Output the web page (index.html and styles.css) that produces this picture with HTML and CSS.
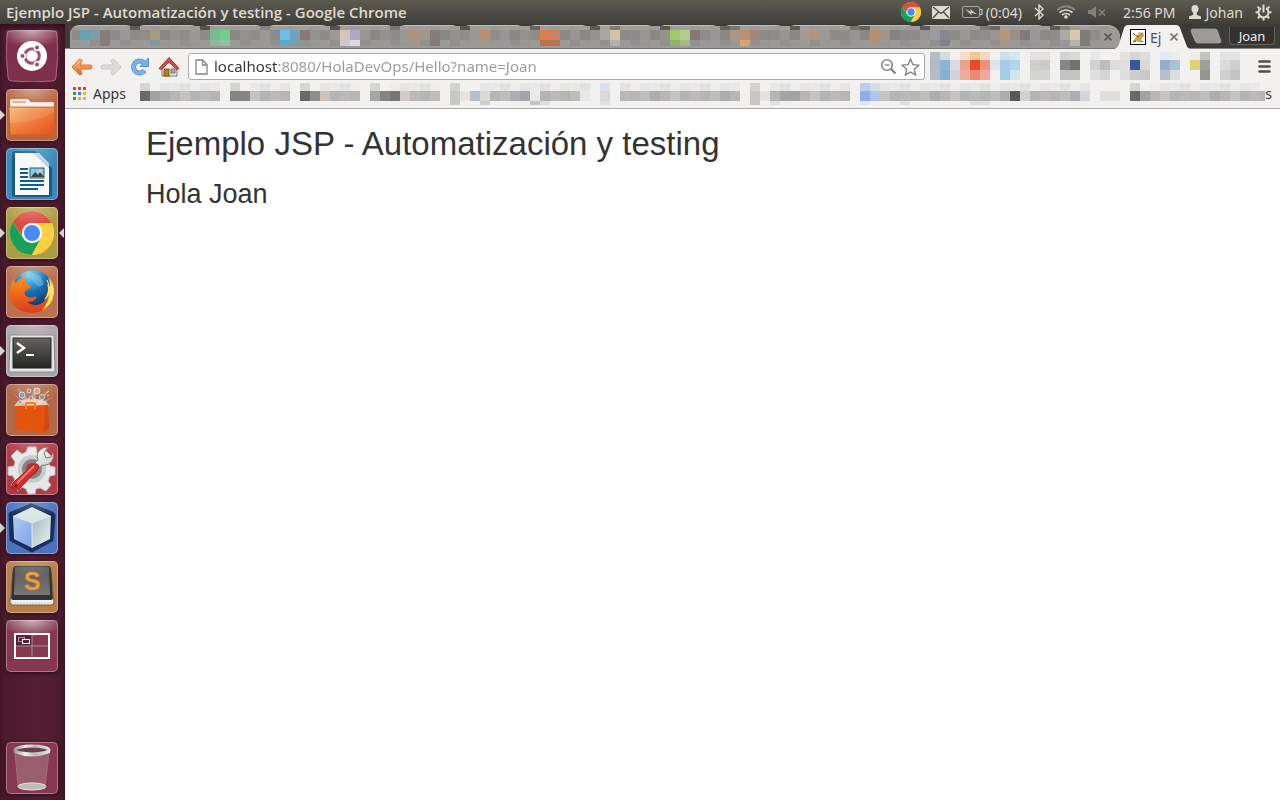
FILE: index.html
```html
<!DOCTYPE html>
<html lang="es">
<head>
<meta charset="utf-8">
<title>Ejemplo JSP - Automatización y testing</title>
<link rel="stylesheet" href="styles.css">
</head>
<body>
<svg width="0" height="0" class="defs" aria-hidden="true">
  <defs>
    <radialGradient id="shine" cx=".5" cy="0" r=".6"><stop offset="0" stop-color="#fff" stop-opacity=".6"/><stop offset="1" stop-color="#fff" stop-opacity="0"/></radialGradient>
    <linearGradient id="orange" x1="0" y1="0" x2="1" y2="1"><stop offset="0" stop-color="#f6b66e"/><stop offset=".5" stop-color="#ef7b3a"/><stop offset="1" stop-color="#e4501b"/></linearGradient>
    <linearGradient id="arrow" x1="0" y1="0" x2="0" y2="1"><stop offset="0" stop-color="#fbc28c"/><stop offset="1" stop-color="#e66a1c"/></linearGradient>
    <linearGradient id="steel" x1="0" y1="0" x2="1" y2="1"><stop offset="0" stop-color="#fafafa"/><stop offset="1" stop-color="#c6c6c6"/></linearGradient>
    <linearGradient id="screen" x1="0" y1="0" x2="0" y2="1"><stop offset="0" stop-color="#66625f"/><stop offset="1" stop-color="#262626"/></linearGradient>
    <linearGradient id="key" x1="0" y1="0" x2="0" y2="1"><stop offset="0" stop-color="#5b5b59"/><stop offset="1" stop-color="#777775"/></linearGradient>
    <radialGradient id="globe" cx=".4" cy=".15" r=".8"><stop offset="0" stop-color="#6fd0f2"/><stop offset=".5" stop-color="#1c70b4"/><stop offset="1" stop-color="#123468"/></radialGradient>
    <linearGradient id="fox" x1="0" y1="0" x2="0" y2="1"><stop offset="0" stop-color="#f59a28"/><stop offset=".5" stop-color="#ee6a1c"/><stop offset="1" stop-color="#dc3b1b"/></linearGradient>
    <linearGradient id="cubeleft" x1="0" y1="0" x2="1" y2="1"><stop offset="0" stop-color="#b5cbf4"/><stop offset="1" stop-color="#7c9fe2"/></linearGradient>
    <linearGradient id="cuberight" x1="0" y1="0" x2="1" y2="1"><stop offset="0" stop-color="#9fb7be"/><stop offset="1" stop-color="#eef4f4"/></linearGradient>
    <linearGradient id="rim" x1="0" x2="1"><stop offset="0" stop-color="#999"/><stop offset=".3" stop-color="#eee"/><stop offset=".6" stop-color="#bbb"/><stop offset="1" stop-color="#e5e5e5"/></linearGradient>
    <symbol id="chrome" viewBox="0 0 44 44">
      <circle cx="22" cy="22" r="22" fill="#ffce44"/>
      <path d="M22 12H41.5A22 22 0 0 0 2.9 11L13 26Z" fill="#db4b40"/>
      <path d="M2.9 11A22 22 0 0 0 22 44L31 27L13 27Z" fill="#19a05b"/>
      <path d="M22 44A22 22 0 0 0 41.5 12H22L31 27Z" fill="#ffce44"/>
      <circle cx="22" cy="22" r="10.2" fill="#fff"/><circle cx="22" cy="22" r="8" fill="#4a8af5"/>
    </symbol>
  </defs>
</svg>

<header class="panel">
  <span class="panel-title">Ejemplo JSP - Automatización y testing - Google Chrome</span>
  <div class="indicators">
    <svg class="i-chrome" width="20" height="20"><use href="#chrome"/></svg>
    <svg class="i-mail" width="18" height="13" viewBox="0 0 18 13"><rect width="18" height="13" rx="1" fill="#dfdbd2"/><path d="M1 1l8 6.5L17 1M1 12l5.5-6M17 12l-5.5-6" fill="none" stroke="#4a4944" stroke-width="1.3"/></svg>
    <span class="battery"><svg width="21" height="12" viewBox="0 0 21 12"><rect x=".5" y=".5" width="17" height="11" rx="1.5" fill="none" stroke="#aaa79f"/><path d="M18 3.5h2v5h-2" fill="none" stroke="#dfdbd2"/><path d="M3 3l6 3-1-3 7 5.500-6-2 1 3z" fill="#dfdbd2"/></svg><span>(0:04)</span></span>
    <svg class="i-bt" width="10" height="16" viewBox="0 0 10 16"><path d="M1 4l8 7-4 4V1l4 4-8 7" fill="none" stroke="#dfdbd2" stroke-width="1.4"/></svg>
    <svg class="i-wifi" width="20" height="14" viewBox="0 0 20 14"><g fill="none" stroke-width="1.7"><path d="M1 5q9-7.500 18 0" stroke="#86837c"/><path d="M3.500 7.500q6.500-5 13 0M6 10q4-3 8 0" stroke="#dfdbd2"/></g><circle cx="10" cy="12" r="1.800" fill="#dfdbd2"/></svg>
    <svg class="i-mute" width="18" height="12" viewBox="0 0 18 12"><path d="M0 4h3l5-4v12L3 8H0z" fill="#84817a"/><path d="M11 3.500l6 6m0-6l-6 6" stroke="#84817a" stroke-width="1.700"/></svg>
    <time>2:56 PM</time>
    <span class="user"><svg width="14" height="14" viewBox="0 0 14 14"><path d="M7 0c2.300 0 3.500 1.500 3.500 4C10.500 6 9.500 7 8.800 8v1.800L13 11.500V14H1v-2.500L5.200 9.800V8C4.500 7 3.500 6 3.500 4 3.500 1.500 4.700 0 7 0z" fill="#dfdbd2"/></svg><span>Johan</span></span>
    <svg class="i-gear" width="17" height="17" viewBox="-8.500 -8.500 17 17"><g fill="none" stroke="#dfdbd2"><path d="M-2.500-4.300A5 5 0 1 0 2.500-4.300" stroke-width="2"/><path d="M0-8V0" stroke-width="2"/><path d="M3.900-3.900l2-2M-3.900-3.900l-2-2M5-.2h3M-5-.2h-3M3.700 3.700l2 2M-3.700 3.700l-2 2M0 5v3" stroke-width="2"/></g></svg>
  </div>
</header>

<div class="desktop">
<nav class="launcher" aria-label="Launcher">
  <button class="tile dash" aria-label="Dash"><svg viewBox="0 0 52 52"><path d="M4 1Q26-1 48 1Q51 1 51 5Q53 26 50 47Q50 51 46 51Q26 53 6 51Q2 51 2 47Q-1 26 1 5Q1 1 4 1Z" fill="#80304c" stroke="#a76b80"/><rect width="52" height="30" fill="url(#shine)"/><circle cx="26" cy="26" r="15" fill="#fff"/><circle cx="26" cy="26" r="7.300" fill="none" stroke="#97566c" stroke-width="3"/><g stroke="#fff" stroke-width="1.500" fill="#97566c"><circle cx="16.500" cy="26" r="2.800"/><circle cx="31" cy="17.500" r="2.800"/><circle cx="31" cy="34.500" r="2.800"/></g></svg></button>
  <button class="tile files running" aria-label="Files"><svg viewBox="0 0 52 52"><path d="M4 11q0-1 1-1h17l3 3h22q1 0 1 1v6H4z" fill="#f5f2ee" stroke="#c3845f" stroke-width=".5"/><rect x="7" y="12" width="13" height="2" fill="#f2aa7b"/><path d="M3 18H49L48 46H4Z" fill="url(#orange)" stroke="#cc5b27" stroke-width=".8"/><path d="M4 34Q30 34 48 23V19H4Z" fill="#fff" opacity=".12"/><rect width="52" height="28" fill="url(#shine)" opacity=".7"/></svg></button>
  <button class="tile writer" aria-label="Writer"><svg viewBox="0 0 52 52"><rect x="6" y="3" width="40" height="46" rx="3" fill="#175c88"/><path d="M28 2H46V20Z" fill="#3f8fbb"/><path d="M9 5H28L43 20V47H9Z" fill="#f8f8f8"/><path d="M28 5L43 20V15L33 5Z" fill="#bddbea"/><path d="M14 21h8M14 25h8M14 29h8M14 33h24M14 37h24M14 41h18" stroke="#145c8a" stroke-width="2"/><rect x="24" y="20" width="14" height="10" fill="#8bc9ec" stroke="#145c8a"/><path d="M25 29l4-5 3 3 2-3 4 5z" fill="#48412f"/><circle cx="34" cy="23" r="1.500" fill="#f5df6a"/><rect width="52" height="26" fill="url(#shine)" opacity=".35"/></svg></button>
  <button class="tile chrome running active" aria-label="Google Chrome"><svg viewBox="0 0 52 52"><use href="#chrome" x="4" y="4" width="44" height="44"/><rect width="52" height="30" fill="url(#shine)" opacity=".5"/></svg></button>
  <button class="tile firefox" aria-label="Firefox"><svg viewBox="0 0 52 52"><circle cx="27" cy="24" r="20" fill="url(#globe)"/><path d="M26 7l8 3 4 8-4 3-5-3-3-5zM14 9l7-4 5 1-5 6z" fill="#8fd6f0" opacity=".4"/><path d="M46 20Q49 30 43 39Q36 47 26 47Q8 46 4 31Q3 19 8 12Q8 16 10 17Q12 13 16 13Q17 9 20 8Q18 13 20 17L25 20Q24 23 19 25Q18 28 20 30Q24 33 30 30Q31 33 27 35Q23 36 21 36Q28 42 36 37Q42 33 42 25Z" fill="url(#fox)"/><path d="M42 11Q49 18 48 28Q46 40 36 44Q43 36 43 29Q41 33 38 34Q44 25 41 18L44 21Q44 15 42 11Z" fill="#fbd849"/><path d="M46 20q1 12-6 19M41 14q4 8 1 14" stroke="#fff6bb" fill="none"/><rect width="52" height="28" fill="url(#shine)" opacity=".4"/></svg></button>
  <button class="tile terminal running" aria-label="Terminal"><svg viewBox="0 0 52 52"><path d="M4 11q0-1 1-1h42q1 0 1 1l1 35q0 1-1 1H4q-1 0-1-1z" fill="#e5e5e5" stroke="#8d8a8b"/><rect x="7" y="13" width="38" height="30" fill="url(#screen)" stroke="#242424"/><path d="M11 18l7 5-7 5" fill="none" stroke="#fff" stroke-width="2.400"/><path d="M20 30h8" stroke="#fff" stroke-width="2"/><rect width="52" height="28" fill="url(#shine)" opacity=".4"/></svg></button>
  <button class="tile software" aria-label="Software Center"><svg viewBox="0 0 52 52"><path d="M26 27L5 8L17 17L11 3L24 16L29 2L30 17L44 4L36 18L48 12Z" fill="#fff" opacity=".3"/><path d="M8 22L12 17L26 14L40 17L43 22Z" fill="#fff" opacity=".6"/><g stroke="#dcd4d0" stroke-width="1"><circle cx="16" cy="11" r="3" fill="#6da5c4"/><circle cx="23" cy="7" r="2" fill="#a97b62"/><circle cx="31" cy="7" r="3" fill="#b6a39c"/><circle cx="36" cy="13" r="2.500" fill="#778f9b"/><circle cx="25" cy="14" r="2" fill="#6c91aa"/><circle cx="14" cy="18" r="1.500" fill="#699"/><path d="M41 9l2-2m-2 5l2-1"/></g><path d="M9 22L42 21L43 44L38 49L9 46Z" fill="#e3540c"/><path d="M39 22L42 21L43 44L38 49Z" fill="#d04c0c"/><path d="M20 25V20q0-1 1-1h7q1 0 1 1v5" fill="none" stroke="#f37d26" stroke-width="2"/><rect width="52" height="25" fill="url(#shine)" opacity=".4"/></svg></button>
  <button class="tile settings" aria-label="System Settings"><svg viewBox="0 0 52 52"><path d="M22 4h8l1 6 4 2 5-4 6 6-4 5 2 4 5 1v8l-5 1-2 5 3 4-5 6-6-3-4 1-1 5h-7l-2-5-4-2-5 4-6-6 4-5-2-4-5-1v-8l6-1 1-4-4-6 6-6 5 4 4-2z" fill="#e7e7e7" stroke="#bbb"/><circle cx="26" cy="26" r="12" fill="#8b8080" stroke="#c9c9c9" stroke-width="4"/><circle cx="26" cy="26" r="6" fill="#a63c44"/><path d="M28 21L32 17Q29 9 37 5L42 4L38 10L40 15L45 14L47 9Q49 17 43 21Q38 23 36 22L32 26Z" fill="url(#steel)" stroke="#777"/><path d="M28 21q5-1 5 4L15 44q-4 5-8 2-3-4 2-8z" fill="#d62e2e" stroke="#9d1c22"/><path d="M28 23L11 40" stroke="#f27b77" stroke-width="2"/><circle cx="10" cy="43" r="1.800" fill="#8b1b20"/><rect width="52" height="28" fill="url(#shine)" opacity=".4"/></svg></button>
  <button class="tile netbeans running" aria-label="NetBeans"><svg viewBox="0 0 52 52"><path d="M25 3L46 11Q48 12 48 14L46 38L26 49L5 38L4 13Q4 11 6 11Z" fill="#16284f" stroke="#1b2f5c" stroke-width="3" stroke-linejoin="round"/><path d="M7 14L26 5L45 14L26 21Z" fill="#d7e7e3"/><path d="M7 14L26 21V46L8 37Z" fill="url(#cubeleft)"/><path d="M45 14L26 21V46L44 37Z" fill="url(#cuberight)"/><path d="M7 14l19 7 19-7M26 21v25" stroke="#eff8fa" fill="none" opacity=".8"/><rect width="52" height="28" fill="url(#shine)" opacity=".4"/></svg></button>
  <button class="tile sublime" aria-label="Sublime Text"><svg viewBox="0 0 52 52"><path d="M7 8L4 41q0 3 3 3h38q3 0 3-3L45 8z" fill="#f2f2f2" stroke="#7c6044"/><path d="M10 5h32q3 0 3 3l2 29q0 2-2 2H7q-2 0-2-2L7 8q0-3 3-3z" fill="#323232"/><path d="M11 6h30q2 0 2 2l1 26H8L9 8q0-2 2-2z" fill="url(#key)"/><path d="M5 42h42" stroke="#c0c0c0" stroke-dasharray="2 1"/><text x="26" y="29" class="s-mark">S</text><rect width="52" height="28" fill="url(#shine)" opacity=".4"/></svg></button>
  <button class="tile workspaces" aria-label="Workspace Switcher"><svg viewBox="0 0 52 52"><rect x="9" y="14" width="17" height="12" fill="#542238"/><path d="M26 14v24M9 26h34" stroke="#999f94"/><rect x="9" y="14" width="34" height="24" fill="none" stroke="#fff" stroke-width="2"/><rect x="12.500" y="17.500" width="6" height="4" fill="none" stroke="#a9999f"/><rect x="16.500" y="19.500" width="7" height="4" fill="#542238" stroke="#fff"/><rect width="52" height="28" fill="url(#shine)"/></svg></button>
  <button class="tile trash" aria-label="Trash"><svg viewBox="0 0 52 52"><path d="M9 10L12 45Q26 50 39 45L43 10Z" fill="#c5a3ad" opacity=".35" stroke="#e0c9d0"/><ellipse cx="26" cy="44.500" rx="14" ry="3.500" fill="#bcbdb8" stroke="#e5e5e5"/><ellipse cx="26" cy="8" rx="17" ry="4" fill="#6f3c4d" stroke="url(#rim)" stroke-width="3"/><path d="M8 8q18 8 36 0v3q-18 7-36 0z" fill="url(#rim)"/></svg></button>
</nav>

<main class="browser">
  <div class="tabstrip">
    <div class="tabs" id="tabs">
      <svg class="mosaic" data-mosaic="tabs"></svg>
    </div>
    <div class="tab-active">
      <svg class="tab-shape" viewBox="0 0 76 25" preserveAspectRatio="none"><path d="M0 25Q4 24 5 20L10 4Q11 1 14 1H62Q65 1 66 4L72 20Q73 24 76 25Z" fill="#f2f1f0"/></svg>
      <svg class="favicon" width="16" height="16" viewBox="0 0 16 16"><rect x=".5" y=".5" width="15" height="15" fill="#fff" stroke="#000"/><path d="M2 12l3-2 1-3-3-2 5 1 1-3 2 1 2-1 1 4-2 2-1 3 3 1-5 0-3-1z" fill="#d2a249"/><path d="M3 4l2 2M3 13l3-1M11 5h1M11 12l2 1M7 7l2 1" stroke="#514733"/></svg>
      <span class="tab-label">Ej</span>
      <button class="close" aria-label="Close tab"><svg width="8" height="8" viewBox="0 0 8 8"><path d="M.5 .5l7 7m0-7l-7 7" stroke="#777" stroke-width="1.600"/></svg></button>
    </div>
    <button class="newtab" aria-label="New tab"><svg width="32" height="16" viewBox="0 0 32 16"><path d="M3 1h22q2 0 2.500 2L31 13q0 2-2 2H8q-2 0-3-2L1 3q0-2 2-2z" fill="#9c9b99" stroke="#b8b7b5" stroke-width=".6"/></svg></button>
    <button class="profile">Joan</button>
  </div>

  <div class="toolbar">
    <button aria-label="Back"><svg width="22" height="18" viewBox="0 0 22 18"><path d="M1 9L8 1.500Q10 .5 11 2.500L9 7H19Q21 7 21 9Q21 11 19 11H9L11 15.500Q10 17.500 8 16.500Z" fill="url(#arrow)" stroke="#d8702f"/></svg></button>
    <button aria-label="Forward"><svg width="22" height="18" viewBox="0 0 22 18"><path d="M21 9L14 1.500Q12 .5 11 2.500L13 7H3Q1 7 1 9Q1 11 3 11H13L11 15.500Q12 17.500 14 16.500Z" fill="#dddbd9" stroke="#cccac8"/></svg></button>
    <button aria-label="Reload"><svg width="20" height="20" viewBox="0 0 20 20"><path d="M14.500 13.500A6 6 0 1 1 13.500 5.500" fill="none" stroke="#5a94cd" stroke-width="5"/><path d="M18.500 1V9.500H10Z" fill="#76aee0" stroke="#5a94cd"/><path d="M14.500 13.500A6 6 0 1 1 13.500 5.500L15 7" fill="none" stroke="#7cb1e2" stroke-width="3.400"/></svg></button>
    <button aria-label="Home"><svg width="22" height="22" viewBox="0 0 22 22"><path d="M4 10v10h15V10l-7-7z" fill="#efece6" stroke="#777"/><path d="M1 12.500L11 1.500L21 12.500L18.500 13.500L11 6L3.500 13.500Z" fill="#d34a4a" stroke="#a63338"/><rect x="6" y="13" width="5" height="7" fill="#bd7d1c" stroke="#835612"/><rect x="13" y="13" width="4" height="4" fill="#98a9b5" stroke="#777"/></svg></button>
    <div class="omnibox">
      <svg width="13" height="16" viewBox="0 0 13 16"><path d="M1 1h6.500L12 5.500V15H1zM7.500 1v5H12" fill="#fff" stroke="#858585" stroke-width="1.300"/></svg>
      <input type="text" aria-label="Address" value="localhost:8080/HolaDevOps/Hello?name=Joan">
      <svg width="17" height="17" viewBox="0 0 17 17"><circle cx="7" cy="7" r="5.300" fill="none" stroke="#858585" stroke-width="1.600"/><path d="M4.500 7h5" stroke="#858585" stroke-width="1.300"/><path d="M11 11l4.500 4.500" stroke="#858585" stroke-width="2.400"/></svg>
      <svg width="19" height="18" viewBox="0 0 19 18"><path d="M9.500 1l2.400 5.600 6 .6-4.500 4 1.300 5.900-5.200-3.200-5.200 3.200 1.300-5.900-4.500-4 6-.6z" fill="#fff" stroke="#777" stroke-width="1.200"/></svg>
    </div>
    <svg class="extensions" data-mosaic="extensions"></svg>
    <button class="menu" aria-label="Menu"><svg width="13" height="13" viewBox="0 0 13 13"><path d="M1.500 1.500h10M1.500 6.500h10M1.500 11.500h10" stroke="#505050" stroke-width="2.600" stroke-linecap="round"/></svg></button>
  </div>

  <div class="bookmarks">
    <a href="#apps"><svg width="13" height="13" viewBox="0 0 13 13"><path d="M0 1.500h13" stroke="#e43c36" stroke-width="3" stroke-dasharray="3 2"/><path d="M0 6.500h3M0 11.500h3" stroke="#2d9b57" stroke-width="3"/><path d="M5 6.500h3" stroke="#3883ef" stroke-width="3"/><path d="M10 6.500h3M5 11.500h3M10 11.500h3" stroke="#f5b014" stroke-width="3"/></svg>Apps</a>
    <svg class="links" data-mosaic="bookmarks"></svg>
    <span class="tail">s</span>
  </div>

  <article class="page">
    <h1>Ejemplo JSP - Automatización y testing</h1>
    <h2>Hola Joan</h2>
  </article>
</main>
</div>
<script src="mosaic.js"></script>
</body>
</html>
```
FILE: styles.css
```css
* { box-sizing: border-box; }
body { margin: 0; height: 100vh; display: flex; flex-direction: column; overflow: hidden; font-family: "Noto Sans", sans-serif; font-size: 14px; background: #fff; }
button { border: 0; padding: 0; margin: 0; background: none; font: inherit; display: flex; align-items: center; justify-content: center; }
svg { display: block; flex: none; }
.defs { position: absolute; }

.panel { height: 24px; flex: none; display: flex; align-items: center; justify-content: space-between; padding: 0 8px 0 6px; color: #dfdbd2; background: linear-gradient(#5d5b50, #3f3e39); }
.panel-title { font-family: "Open Sans", "Noto Sans", sans-serif; font-weight: 600; font-size: 15px; line-height: 22px; white-space: nowrap; }
.indicators { display: flex; align-items: center; gap: 12px; white-space: nowrap; }
.battery, .user { display: flex; align-items: center; gap: 4px; }
.battery { gap: 3px; }
.indicators time { margin-left: 5px; }
.i-chrome { margin-right: -1px; }

.desktop { flex: 1; min-height: 0; display: flex; }
.launcher { width: 65px; flex: none; display: flex; flex-direction: column; gap: 7px; padding: 6px; background: linear-gradient(90deg, #4a1a2d, #551e33 70%, #47192b); box-shadow: inset 0 3px 4px #30101d; }
.tile { position: relative; width: 52px; height: 52px; flex: none; border-radius: 5px; box-shadow: inset 0 0 0 1px #ffffff55, 0 1px 4px #250b16; }
.tile svg { width: 52px; height: 52px; }
.dash { box-shadow: none; }
.files { background: #b66640; }
.writer { background: #3a89b9; }
.chrome { background: #ad9d42; }
.firefox { background: #b97250; }
.terminal { background: #aaa5a8; }
.software { background: #b1694a; }
.settings { background: #b03a45; }
.netbeans { background: #4a72bd; }
.sublime { background: #b67f45; }
.workspaces, .trash { background: #853850; }
.trash { margin-top: auto; }
.running::before, .active::after { content: ""; position: absolute; top: 21px; left: -6px; border: 5px solid transparent; border-left-color: #d8d4d6; border-right-width: 0; }
.active::after { left: auto; right: -6px; border-left-width: 0; border-right: 5px solid #d8d4d6; }
.s-mark { font: 700 25px "Liberation Sans", Arial, sans-serif; fill: #f7992c; text-anchor: middle; }

.browser { flex: 1; min-width: 0; display: flex; flex-direction: column; background: #fff; }
.tabstrip { height: 25px; flex: none; display: flex; align-items: center; padding: 0 5px; background: #3c3b37; border-bottom: 1px solid #888; }
.tabs { position: relative; flex: 1; min-width: 0; height: 25px; display: flex; align-items: flex-end; }
.tab { flex: 1; min-width: 0; height: 24px; justify-content: flex-end; background: #9b9a97; border-top: 1px solid #bebdb9; border-bottom: 1px solid #747370; border-radius: 9px 9px 0 0; }
.tab:last-of-type { padding-right: 8px; border-top-right-radius: 12px; }
.mosaic { position: absolute; left: 2px; top: 2px; width: 1028px; height: 20px; }
.tab-active { position: relative; width: 76px; height: 25px; flex: none; display: flex; align-items: center; gap: 4px; padding: 2px 12px 0 16px; margin-left: -6px; z-index: 1; }
.tab-shape { position: absolute; inset: 0; width: 100%; height: 100%; }
.favicon, .tab-label, .close { position: relative; }
.tab-label { color: #50505c; flex: 1; overflow: hidden; }
.newtab { width: 32px; height: 16px; }
.profile { width: 46px; height: 18px; margin-left: 7px; font-size: 13px; color: #eee; background: #33322f; border: 1px solid #66645f; border-top: 0; border-radius: 0 0 4px 4px; }

.toolbar { height: 33px; flex: none; display: flex; align-items: center; gap: 7px; padding: 2px 9px 0 6px; background: #f2f1f0; }
.toolbar button { width: 22px; height: 24px; flex: none; }
.omnibox { flex: 1; min-width: 0; height: 27px; display: flex; align-items: center; gap: 4px; padding: 0 4px 0 6px; margin-left: 1px; background: #fff; border: 1px solid #aaa; border-radius: 3px; }
.omnibox input { flex: 1; min-width: 0; border: 0; padding: 0 0 2px 2px; outline: 0; font: 15px "Noto Sans", sans-serif; color: transparent; background: linear-gradient(90deg, #333 65px, #999 65px); -webkit-background-clip: text; background-clip: text; }
.extensions { width: 310px; height: 28px; margin: 0 0 2px -2px; }
.toolbar .menu { width: 13px; margin-left: 11px; }

.bookmarks { height: 27px; flex: none; display: flex; align-items: center; padding: 0 8px 3px; background: #f2f1f0; border-bottom: 1px solid #aaa; color: #333; }
.bookmarks a { display: flex; align-items: center; gap: 7px; width: 67px; color: inherit; text-decoration: none; }
.links { flex: 1; min-width: 0; height: 22px; }

.page { flex: 1; padding: 16px 81px; color: #333; font-family: "Liberation Sans", Arial, sans-serif; }
.page h1, .page h2 { margin: 0; font-weight: 400; }
.page h1 { font-size: 33px; line-height: 38px; }
.page h2 { font-size: 27px; line-height: 32px; margin-top: 15px; }
```
FILE: mosaic.js
```js
const NS = "http://www.w3.org/2000/svg";
const grays = ["#8f8c89", "#979693", "#8a8784", "#94928f", "#908d88", "#9a9996", "#8d8b88"];
const soft = ["#b5b5b4", "#bfbdbc", "#acadb0", "#b8b5b2", "#c5c3c2", "#b2b4b6", "#bcb7ba"];

function paint(svg, rows) {
  rows.forEach(({ y, h, cells }) => cells.forEach(([x, color]) => {
    const r = document.createElementNS(NS, "rect");
    r.setAttribute("x", x); r.setAttribute("y", y);
    r.setAttribute("width", 10); r.setAttribute("height", h);
    r.setAttribute("fill", color);
    svg.append(r);
  }));
}
const parse = s => s.trim().split(/\s+/).map(p => { const [x, c] = p.split(":"); return [+x, "#" + c]; });
const fill = (from, to, colors, own) => {
  const m = new Map();
  for (let x = from, i = 0; x < to; x += 10, i++) m.set(x, colors[i % colors.length]);
  parse(own).forEach(([x, c]) => m.set(x, c));
  return [...m];
};
const shift = (cells, d) => cells.map(([x, c]) => [x - d, c]);

const tabs = document.getElementById("tabs");
for (let i = 15; i >= 0; i--) {
  const b = document.createElement("button");
  b.className = "tab";
  b.setAttribute("aria-label", "Tab " + (i + 1));
  tabs.prepend(b);
}
tabs.querySelector(".tab:last-of-type").innerHTML = '<svg width="8" height="8" viewBox="0 0 8 8"><path d="M.5 .5l7 7m0-7l-7 7" stroke="#5d5350" stroke-width="1.600"/></svg>';

const find = n => document.querySelector(`[data-mosaic=${n}]`);
paint(find("tabs"), [
  { y: 0, h: 4, cells: shift(fill(80, 1100, ["#a09f9c", "#9d9c99"], "130:5e5d59 200:555450 260:85837f 330:55544f 390:777672 460:555450 530:666560 590:5b5a56 610:7c7b78 660:5b5a56 720:63625e 730:777673 790:5b5a56 850:74736f 860:63625e 920:5b5a56 980:7c7b77 990:6a6965 1050:5b5a56 1060:85847f"), 72) },
  { y: 4, h: 10, cells: shift(fill(70, 1100, grays, "80:68a1b5 90:7e9da5 100:857c7b 150:a59b80 210:76bf8a 220:6dcf8a 280:69bfe8 290:71a3bb 300:85797a 340:d4c7b9 350:b1a8c3 410:b0937f 420:a4978a 430:857d7c 480:b99070 540:db7d4d 550:cb8260 560:8f8985 600:a8a7a4 610:d2c3a5 670:9fca6c 680:aed08a 690:837975 730:a89887 740:bc8f70 750:a38777 800:a69b94 810:b3937b 870:b5906f 880:a0938b 890:828282 930:9c9ba0 940:858891 1000:b4967c 1010:9c9086 1020:81797c 1060:aba9a4 1070:d7c9ac 1080:827b77"), 72) },
  { y: 14, h: 6, cells: shift(fill(70, 1100, ["#989795", "#9b9a97", "#929190"], "80:939d9e 100:857d7e 150:80989e 210:91b99c 220:8fc0a0 280:5aa9ca 290:769faa 340:cbcac7 350:dadae3 410:a69688 430:827b7b 480:a5998c 540:bd7349 550:bd734b 610:b1b1b0 670:90b16a 680:a4b886 740:dda172 870:a99482 940:7e838a 1000:ac9581 1070:b5b4b0 1080:817c7a"), 72) }
]);

paint(find("extensions"), [
  { y: 0, h: 8, cells: shift(parse("930:b4bcc7 940:d3dae1 960:f3decd 970:f2c891 980:f0d8c5 1000:d0e0e9 1010:d5e8f1 1030:e2e1e0 1040:e3e2e1 1060:d3d3d3 1070:d8d8d8 1090:e8e8e8 1120:e3e3e2 1130:d5d5d5 1140:dedddd 1160:e1ebf1 1170:e8edef 1190:ececea 1200:c3c2c0 1220:e3e3e2 1230:e3e3e2"), 930) },
  { y: 8, h: 10, cells: shift(parse("930:b1bac6 940:8eb2d8 950:d8dbe2 960:eca291 970:e7492a 980:ec8f7b 990:dfe5e9 1000:a5cce8 1010:b4d5e9 1030:cecece 1040:cacaca 1060:878787 1070:717171 1090:d0d0d0 1100:bdbdbd 1110:dddddd 1120:dfdfdd 1130:37599a 1140:d9d9d8 1160:95adc6 1170:a9c2d8 1190:e0d171 1200:9f9f9b 1220:dadbdc 1230:cecfd1"), 930) },
  { y: 18, h: 10, cells: shift(parse("930:b6bcc4 940:86afd8 950:d0d3d9 960:f0ab9c 970:ec8973 980:f0a798 1000:a2cce7 1010:d5e3eb 1030:d5d5d4 1040:d5d5d4 1060:c3c3c2 1070:c3c3c2 1090:dfdfdd 1100:d5d5d4 1120:dededd 1130:cccdd2 1140:c9c9c8 1160:b5c0cf 1170:d7dbe3 1200:959593 1220:d0d0d0 1230:c4c4c4"), 930) }
]);

const groups = [[140, 220], [230, 290], [300, 360], [370, 440], [450, 460], [480, 590], [600, 610], [620, 740], [750, 760], [770, 850], [860, 1090], [1100, 1120], [1130, 1270]];
const spread = colors => groups.flatMap(([a, b]) => { const o = []; for (let x = a; x < b; x += 10) o.push([x, colors[(x / 10) % colors.length]]); return o; });
const own = (cells, s) => [...new Map([...cells, ...parse(s)])];
paint(find("bookmarks"), [
  { y: 0, h: 8, cells: shift(own(spread(["#e5e5e4", "#eae9e8", "#e2e2e1", "#edecea"]), "140:d5d5d4 150:f2f1f0 230:d5d5d4 240:f2f1f0 300:d5d5d4 310:f2f1f0 370:d5d5d4 380:f2f1f0 450:d2d2d1 600:d9e2eb 750:d2d2d1 860:b8cdf1 870:d2dcef 1100:f2f1f0 1110:f2f1f0 1130:d5d5d4 1140:f2f1f0 1260:f2f1f0"), 140) },
  { y: 8, h: 10, cells: shift(own(spread(soft), "140:696969 150:a2a2a3 230:858585 240:858585 300:696969 310:8d8d8d 320:cac3bc 370:a6a6a6 380:848484 390:767676 400:d1cbc8 450:c7c7c6 460:e8e2df 470:bac0c8 480:dad9d4 520:a3a4a7 530:eaeaea 580:e8e8e8 600:d5d9dc 780:a3a5aa 790:a3a3a3 750:c7c7c6 760:e8e2df 860:92b0e6 870:adc4ed 1010:595959 1020:d5d0cc 1080:d5d5d9 1100:dededd 1110:dededd 1130:696969 1140:a2a2a2"), 140) },
  { y: 18, h: 4, cells: shift(parse("450:c7c7c6 480:c8ced3 530:c5c5c4 540:dddfe3 600:d9e2eb 750:c7c7c6 770:e1e1e4 860:e1e5ef 900:dedfe1 970:dedfe1 980:dedfe1"), 140) }
]);
```
